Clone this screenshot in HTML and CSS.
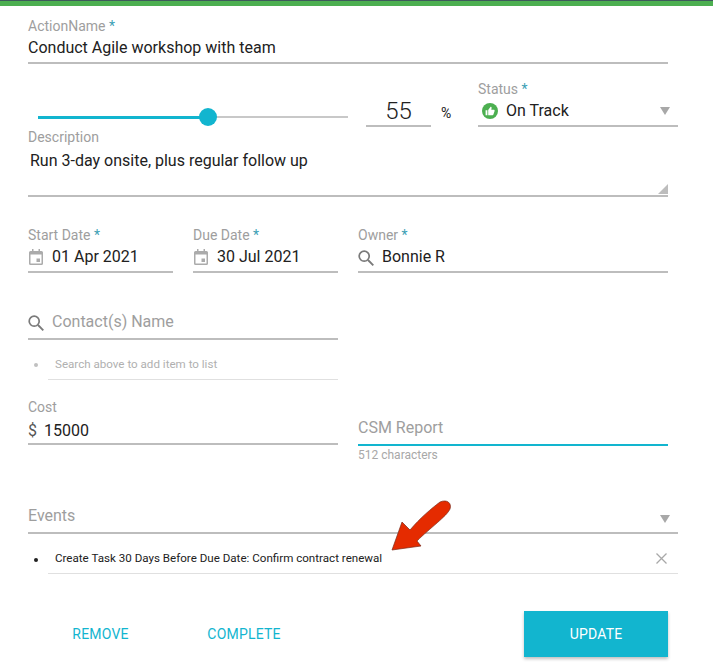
FILE: index.html
```html
<!DOCTYPE html>
<html lang="en">
<head>
<meta charset="utf-8">
<title>Action</title>
<link rel="stylesheet" href="styles.css">
</head>
<body>
<div class="topbar"></div>
<form class="form">
  <div class="field row-name">
    <div class="label">ActionName <span class="req">*</span></div>
    <div class="value">Conduct Agile workshop with team</div>
  </div>

  <div class="row row-progress">
    <div class="slider"><div class="fill"></div><div class="rest"></div><div class="thumb"></div></div>
    <div class="percent">55</div>
    <div class="unit">%</div>
    <div class="field status">
      <div class="label">Status <span class="req">*</span></div>
      <div class="value">
        <svg class="thumbs" viewBox="0 0 16 16" width="16" height="16"><circle cx="8" cy="8" r="8" fill="#4caf50"/><path fill="#fff" d="M3.6 7.2h1.8v5H3.6zM6.2 12.2V7l2.4-3.2c.7 0 1.1.5 1 1.2L9.300 6.800h2.500c.6 0 1 .6.800 1.200l-1.200 3.500c-.1.400-.5.700-.9.700z"/></svg>
        <span>On Track</span>
        <span class="caret"></span>
      </div>
    </div>
  </div>

  <div class="field description">
    <div class="label">Description</div>
    <div class="value area">Run 3-day onsite, plus regular follow up<span class="grip"></span></div>
  </div>

  <div class="row row-dates">
    <div class="field date">
      <div class="label">Start Date <span class="req">*</span></div>
      <div class="value">
        <svg class="cal" viewBox="0 0 14 16" width="14" height="16"><path fill="#ababab" d="M3 0h1.500v2h5V0H11v2h1.500A1.500 1.500 0 0 1 14 3.500v11a1.500 1.500 0 0 1-1.500 1.500h-11A1.500 1.500 0 0 1 0 14.500v-11A1.500 1.500 0 0 1 1.500 2H3zM1.500 5.500v9h11v-9zM7.500 9.500h3.500V13H7.500z"/></svg>
        <span>01 Apr 2021</span>
      </div>
    </div>
    <div class="field date">
      <div class="label">Due Date <span class="req">*</span></div>
      <div class="value">
        <svg class="cal" viewBox="0 0 14 16" width="14" height="16"><path fill="#ababab" d="M3 0h1.500v2h5V0H11v2h1.500A1.500 1.500 0 0 1 14 3.500v11a1.500 1.500 0 0 1-1.500 1.500h-11A1.500 1.500 0 0 1 0 14.500v-11A1.500 1.500 0 0 1 1.500 2H3zM1.500 5.500v9h11v-9zM7.500 9.500h3.500V13H7.500z"/></svg>
        <span>30 Jul 2021</span>
      </div>
    </div>
    <div class="field owner">
      <div class="label">Owner <span class="req">*</span></div>
      <div class="value">
        <svg class="search" viewBox="0 0 16 16" width="16" height="16"><circle cx="6.200" cy="6.200" r="5" fill="none" stroke="#7a7a7a" stroke-width="1.700"/><path d="M10 10l5.300 5.300" stroke="#7a7a7a" stroke-width="1.900" fill="none"/></svg>
        <span>Bonnie R</span>
      </div>
    </div>
  </div>

  <div class="field contacts">
    <div class="value placeholder">
      <svg class="search" viewBox="0 0 16 16" width="16" height="16"><circle cx="6.200" cy="6.200" r="5" fill="none" stroke="#7a7a7a" stroke-width="1.700"/><path d="M10 10l5.300 5.300" stroke="#7a7a7a" stroke-width="1.900" fill="none"/></svg>
      <span>Contact(s) Name</span>
    </div>
    <ul class="items hint"><li>Search above to add item to list</li></ul>
  </div>

  <div class="row row-cost">
    <div class="field cost">
      <div class="label">Cost</div>
      <div class="value"><span class="dollar">$</span><span>15000</span></div>
    </div>
    <div class="report">
      <div class="value placeholder active">CSM Report</div>
      <div class="helper">512 characters</div>
    </div>
  </div>

  <div class="field events">
    <div class="value placeholder">Events<span class="caret"></span></div>
    <ul class="items event"><li>Create Task 30 Days Before Due Date: Confirm contract renewal<span class="close">
      <svg viewBox="0 0 11 11" width="11" height="11"><path d="M.5.500l10 10M10.500.500l-10 10" stroke="#a8a8a8" stroke-width="1.300" fill="none"/></svg>
    </span></li></ul>
  </div>

  <div class="actions">
    <button type="button" class="btn remove">REMOVE</button>
    <button type="button" class="btn complete">COMPLETE</button>
    <button type="button" class="btn update">UPDATE</button>
  </div>
</form>
<svg class="arrow" viewBox="0 0 70 60" width="70" height="60"><path fill="#e52b00" stroke="#7a2a18" stroke-width=".7" d="M6 54L16 26L24 34C34 22 46 12 54 6C61 3 66 7 64 13C61 20 44 32 31 45L35 50Z"/></svg>
</body>
</html>
```
FILE: styles.css
```css
* { box-sizing: border-box; }
html, body { margin: 0; padding: 0; background: #fff; }
body {
  position: relative;
  width: 713px;
  height: 669px;
  overflow: hidden;
  font-family: Roboto, "Liberation Sans", sans-serif;
  color: #212121;
}
.topbar { height: 6px; background: #4caf50; border-top: 1px solid #3d5a5a; }
.form { padding: 12px 35px 0 28px; }
.row { display: flex; }
.label { height: 16px; font-size: 14px; line-height: 16px; color: #9e9e9e; }
.req { color: #3d9fb5; }
.value {
  display: flex;
  align-items: center;
  height: 30px;
  font-size: 16px;
  line-height: 28px;
  border-bottom: 2px solid #bdbdbd;
}
.row-name { width: 640px; }
.row-progress { position: relative; height: 46px; margin-top: 17px; }
.slider { position: relative; display: flex; align-items: center; width: 310px; height: 18px; margin: 27px 0 0 10px; }
.fill { width: 170px; height: 3px; background: #12b5cf; }
.rest { flex: 1; height: 2px; background: #c8c8c8; }
.thumb { position: absolute; left: 161px; top: 0; width: 18px; height: 18px; border-radius: 50%; background: #12b5cf; }
.percent {
  width: 65px;
  height: 30px;
  margin: 16px 0 0 18px;
  border-bottom: 2px solid #bdbdbd;
  font-size: 24px;
  font-weight: 300;
  line-height: 28px;
  text-align: center;
}
.unit { width: 47px; margin-top: 24px; padding-left: 10px; font-size: 14px; line-height: 16px; }
.status { width: 200px; }
.thumbs { margin: 0 8px 0 4px; }
.caret {
  width: 0;
  height: 0;
  margin-left: auto;
  margin-right: 8px;
  border-left: 5px solid transparent;
  border-right: 5px solid transparent;
  border-top: 8px solid #a8a8a8;
}
.description { width: 640px; margin-top: 2px; }
.area { position: relative; align-items: flex-start; height: 52px; padding: 3px 0 0 2px; line-height: 26px; }
.grip {
  position: absolute;
  right: 0;
  bottom: 1px;
  width: 0;
  height: 0;
  border-left: 10px solid transparent;
  border-bottom: 10px solid #bdbdbd;
}
.row-dates { gap: 20px; margin-top: 30px; }
.date { width: 145px; }
.owner { width: 310px; }
.cal { margin: 0 9px 0 1px; }
.search { margin: 2px 8px 0 0; }
.contacts { width: 310px; margin-top: 34px; }
.placeholder { color: #9e9e9e; }
.contacts .placeholder { height: 33px; padding-bottom: 2px; }
.items { list-style: none; margin: 0; padding: 0; font-size: 11.6px; }
.items li {
  position: relative;
  display: flex;
  align-items: center;
  height: 31px;
  margin-left: 20px;
  padding-left: 7px;
  border-bottom: 1px solid #e0e0e0;
}
.items li::before {
  content: "";
  position: absolute;
  left: -14px;
  top: 14px;
  width: 4px;
  height: 4px;
  border-radius: 50%;
  background: currentColor;
}
.hint { margin-top: 9px; color: #b0b0b0; }
.hint li { padding-bottom: 1px; }
.hint li::before { background: #c0c0c0; }
.row-cost { gap: 20px; margin-top: 19px; }
.cost { width: 310px; }
.cost .value { padding-top: 4px; }
.dollar { margin-right: 7px; color: #555; }
.report { width: 310px; }
.active { height: 47px; padding-top: 12px; border-bottom-color: #12b5cf; }
.helper { height: 16px; margin-top: 1px; font-size: 12px; line-height: 16px; color: #a8a8a8; }
.events { width: 650px; margin-top: 38px; }
.events .placeholder { height: 33px; padding-bottom: 2px; }
.events .caret { margin-right: 8px; margin-top: 6px; }
.event { margin-top: 10px; }
.event li { height: 30px; padding-bottom: 2px; color: #212121; }
.event .close { margin-top: 2px; }
.close { display: flex; margin-left: auto; margin-right: 11px; }
.actions { display: flex; align-items: center; margin-top: 37px; width: 640px; }
.btn {
  height: 46px;
  border: 0;
  background: none;
  padding: 0;
  font-family: inherit;
  font-size: 14px;
  color: #12b5cf;
  letter-spacing: .2px;
}
.remove { width: 57px; margin-left: 44px; }
.complete { width: 74px; margin-left: 78px; }
.update {
  width: 144px;
  margin-left: auto;
  background: #12b5cf;
  color: #fff;
  box-shadow: 0 2px 3px rgba(0,0,0,.25);
}
.arrow { position: absolute; left: 386px; top: 496px; }
```
